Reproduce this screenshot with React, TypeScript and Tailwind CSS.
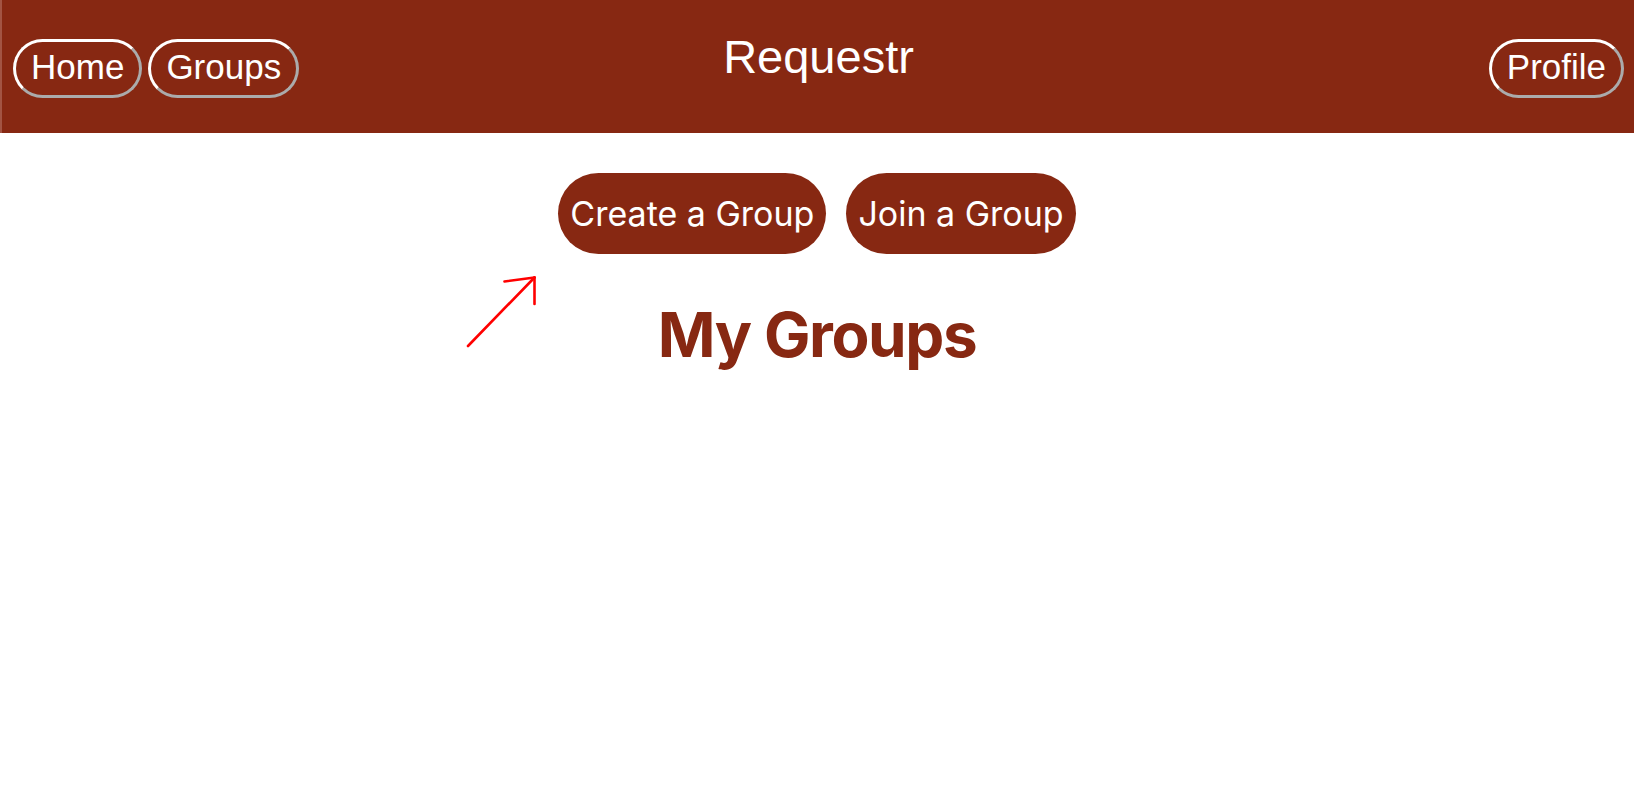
import React from "react";

const navBtn =
  "rounded-full border-[3px] border-white [border-style:outset] px-[15px] pt-[4px] pb-[8px] text-[35px] leading-[41px] text-white bg-transparent";

export default function App() {
  return (
    <div className="relative min-h-[800px] w-full bg-white">
      <header
        className="grid h-[133px] grid-cols-[1fr_auto_1fr] border-l-2 border-[#a35443] bg-[#872812] pl-[11px] pr-[10px]"
        style={{ fontFamily: '"Liberation Sans", Arial, sans-serif' }}
      >
        <nav className="flex items-start gap-[6px] pt-[39px]">
          <button className={navBtn}>Home</button>
          <button className={navBtn}>Groups</button>
        </nav>
        <h1 className="pt-[30px] text-[47px] font-normal leading-[54px] text-white">Requestr</h1>
        <nav className="flex items-start justify-end pt-[39px]">
          <button className={navBtn}>Profile</button>
        </nav>
      </header>

      <main style={{ fontFamily: 'Inter, "Noto Sans", sans-serif' }}>
        <div className="flex justify-center gap-[20px] pt-[40px]">
          <button className="flex h-[81px] items-center rounded-full bg-[#872812] px-3 text-[34px] text-white">
            Create a Group
          </button>
          <button className="flex h-[81px] items-center rounded-full bg-[#872812] px-3 text-[34px] text-white">
            Join a Group
          </button>
        </div>
        <h2 className="flex justify-center pt-[43px] text-[62px] font-bold leading-[75px] tracking-[-1.4px] text-[#872812]">
          My Groups
        </h2>
      </main>

      <svg
        className="pointer-events-none absolute left-0 top-0"
        width="1634"
        height="800"
        viewBox="0 0 1634 800"
      >
        <g stroke="#ff0000" strokeWidth="2.6" strokeLinecap="round" fill="none">
          <path d="M468 346 L534.5 277.5" />
          <path d="M504.5 281.5 L534.5 277.5" />
          <path d="M534.5 277.5 L534.5 304" />
        </g>
      </svg>
    </div>
  );
}
